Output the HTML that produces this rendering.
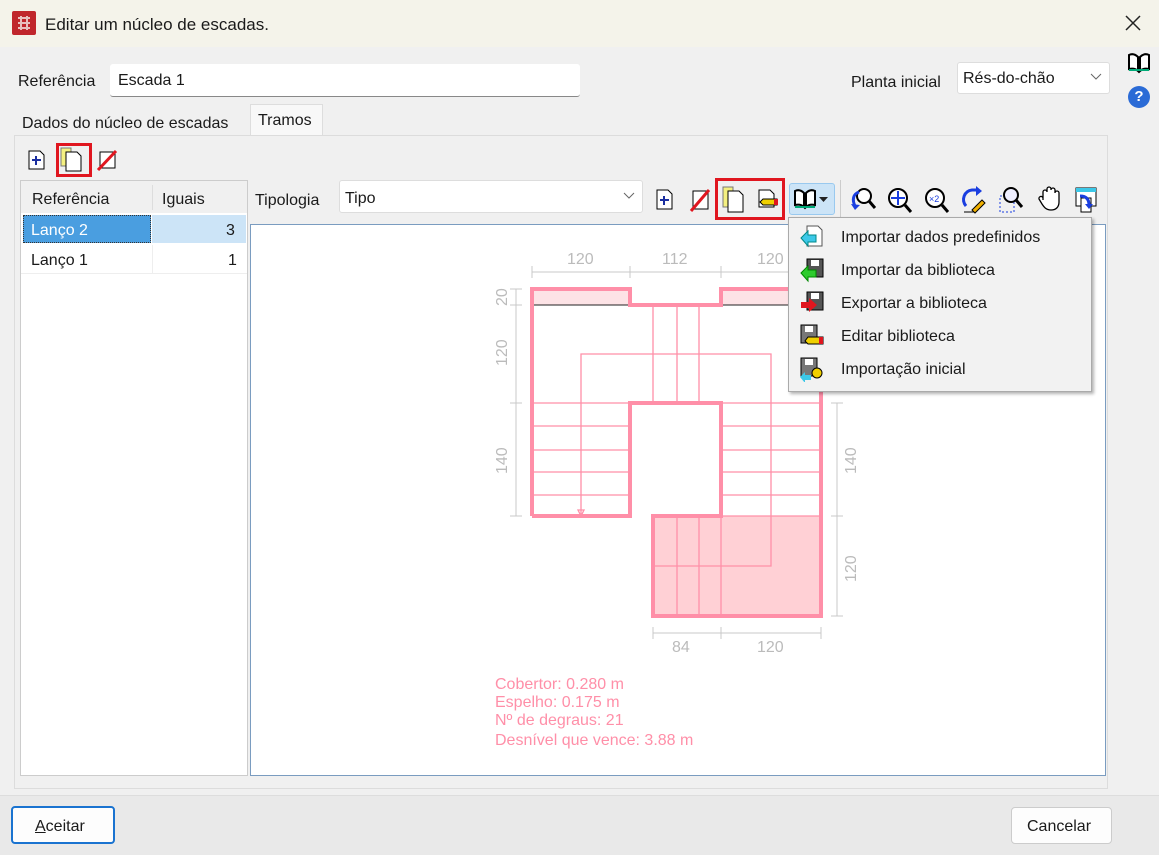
<!DOCTYPE html>
<html><head><meta charset="utf-8"><style>
*{margin:0;padding:0;box-sizing:border-box}
body{width:1159px;height:855px;background:#f0f0f0;font-family:"Liberation Sans",sans-serif;font-size:16px;color:#1a1a1a;position:relative;overflow:hidden}
.a{position:absolute}
.t{position:absolute;white-space:nowrap;margin-top:2px}
</style></head><body>
<div class="a" style="left:0;top:0;width:1159px;height:47px;background:#f4f3ea"></div>
<div class="a" style="left:12px;top:11px;width:24px;height:24px;background:#c0262c;border-radius:2px"></div>
<svg class="a" style="left:12px;top:11px" width="24" height="24"><path d="M6 7h12M6 12h12M6 17h12M9 5v14M15 5v14" stroke="#e8c0c0" stroke-width="2" fill="none"/></svg>
<div class="t" style="left:45px;top:13px;font-size:17px">Editar um núcleo de escadas.</div>
<svg class="a" style="left:1125px;top:15px" width="16" height="16"><path d="M1 1L15 15M15 1L1 15" stroke="#222" stroke-width="1.5"/></svg>

<div class="t" style="left:18px;top:71px">Referência</div>
<div class="a" style="left:110px;top:64px;width:470px;height:33px;background:#fff;border-bottom:1px solid #888;border-radius:3px"></div>
<div class="t" style="left:118px;top:70px">Escada 1</div>
<div class="t" style="left:851px;top:72px">Planta inicial</div>
<div class="a" style="left:957px;top:62px;width:153px;height:32px;background:#fff;border:1px solid #ddd;border-radius:3px"></div>
<div class="t" style="left:963px;top:68px">Rés-do-chão</div>
<svg class="a" style="left:1090px;top:73px" width="12" height="8"><path d="M1 1l5 5 5-5" stroke="#666" fill="none"/></svg>
<svg class="a" style="left:1127px;top:52px" width="24" height="22"><path d="M2 3c4-2 7 0 9 2v14c-2-2-5-3-9-2zM22 3c-4-2-7 0-9 2v14c2-2 5-3 9-2z" stroke="#000" stroke-width="2" fill="#fff"/><path d="M2 18h20" stroke="#0a7" stroke-width="2"/></svg>
<div class="a" style="left:1128px;top:86px;width:22px;height:22px;border-radius:50%;background:#2b6bd6;color:#fff;font-weight:bold;font-size:15px;text-align:center;line-height:22px">?</div>

<div class="t" style="left:22px;top:113px">Dados do núcleo de escadas</div>
<div class="a" style="left:250px;top:104px;width:73px;height:32px;background:#f8f8f8;border:1px solid #ddd;border-bottom:none"></div>
<div class="t" style="left:258px;top:110px">Tramos</div>
<div class="a" style="left:14px;top:135px;width:1094px;height:654px;border:1px solid #dcdcdc;background:#f0f0f0"></div>

<svg class="a" style="left:28px;top:150px" width="18" height="20"><path d="M1 1h11l4 4v14H1z" fill="#fff" stroke="#000"/><path d="M8 6v9M4 10h9" stroke="#1a2ea0" stroke-width="2"/></svg>
<div class="a" style="left:56px;top:143px;width:36px;height:34px;border:3px solid #e0161f"></div>
<svg class="a" style="left:60px;top:147px" width="26" height="26"><path d="M1 1h10v18H1z" fill="#f4f080" stroke="#777"/><path d="M6 5h11l4 4v15H6z" fill="#fff" stroke="#000"/></svg>
<svg class="a" style="left:96px;top:149px" width="22" height="22"><path d="M4 3h15v16H4z" fill="#fff" stroke="#000"/><path d="M2 21L20 2" stroke="#e0161f" stroke-width="3"/></svg>

<div class="a" style="left:20px;top:180px;width:228px;height:596px;background:#fff;border:1px solid #ccc"></div>
<div class="a" style="left:21px;top:181px;width:226px;height:32px;background:#f0f0f0"></div>
<div class="a" style="left:152px;top:185px;width:1px;height:25px;background:#ddd"></div>
<div class="t" style="left:32px;top:189px">Referência</div>
<div class="t" style="left:162px;top:189px">Iguais</div>
<div class="a" style="left:23px;top:215px;width:128px;height:28px;background:#4a9ee0;border:1px dotted #333"></div>
<div class="a" style="left:152px;top:215px;width:94px;height:28px;background:#cce4f7"></div>
<div class="t" style="left:31px;top:220px;color:#fff">Lanço 2</div>
<div class="t" style="left:226px;top:220px">3</div>
<div class="a" style="left:152px;top:245px;width:1px;height:28px;background:#eee"></div>
<div class="a" style="left:21px;top:273px;width:226px;height:1px;background:#eee"></div>
<div class="t" style="left:31px;top:250px">Lanço 1</div>
<div class="t" style="left:228px;top:250px">1</div>

<div class="t" style="left:255px;top:190px">Tipologia</div>
<div class="a" style="left:339px;top:180px;width:304px;height:33px;background:#fff;border:1px solid #ddd;border-radius:3px"></div>
<div class="t" style="left:345px;top:188px">Tipo</div>
<svg class="a" style="left:623px;top:192px" width="12" height="8"><path d="M1 1l5 5 5-5" stroke="#666" fill="none"/></svg>

<svg class="a" style="left:656px;top:189px" width="18" height="22"><path d="M1 1h11l4 4v15H1z" fill="#fff" stroke="#000"/><path d="M8 7v9M4 11h9" stroke="#1a2ea0" stroke-width="2"/></svg>
<svg class="a" style="left:689px;top:188px" width="22" height="24"><path d="M4 3h15v18H4z" fill="#fff" stroke="#000"/><path d="M2 23L20 2" stroke="#e0161f" stroke-width="3"/></svg>
<div class="a" style="left:715px;top:178px;width:70px;height:42px;border:3px solid #e0161f"></div>
<svg class="a" style="left:722px;top:186px" width="26" height="28"><path d="M1 1h10v20H1z" fill="#f4f080" stroke="#777"/><path d="M6 5h11l4 4v17H6z" fill="#fff" stroke="#000"/></svg>
<svg class="a" style="left:757px;top:188px" width="24" height="22"><path d="M2 2h11l4 4v13H2z" fill="#fff" stroke="#000"/><path d="M6 11h14v6H6l-3-3z" fill="#f0d000" stroke="#000"/><path d="M17 11h4v6h-4z" fill="#e0161f"/></svg>
<div class="a" style="left:789px;top:183px;width:46px;height:32px;background:#cce4f7;border:1px solid #99c9ef;border-radius:3px"></div>
<svg class="a" style="left:793px;top:188px" width="26" height="22"><path d="M2 3c4-2 7 0 9 2v14c-2-2-5-3-9-2zM22 3c-4-2-7 0-9 2v14c2-2 5-3 9-2z" stroke="#000" stroke-width="2" fill="#fff"/><path d="M2 19h20" stroke="#0a7" stroke-width="2"/></svg>
<svg class="a" style="left:819px;top:197px" width="10" height="6"><path d="M0 0h9L4.5 5z" fill="#222"/></svg>
<div class="a" style="left:840px;top:180px;width:1px;height:42px;background:#ccc"></div>
<svg class="a" style="left:850px;top:186px" width="26" height="28"><circle cx="14" cy="10" r="7" fill="#fff" stroke="#000" stroke-width="2"/><path d="M19 15l6 7" stroke="#000" stroke-width="3"/><path d="M9 6c-6 2-7 8-4 14" stroke="#1a3ee0" stroke-width="3" fill="none"/><path d="M1 18l4 6 5-5z" fill="#1a3ee0"/></svg>
<svg class="a" style="left:886px;top:186px" width="26" height="28"><circle cx="12" cy="12" r="9" fill="#fff" stroke="#000" stroke-width="2"/><path d="M12 5v14M5 12h14" stroke="#1a3ee0" stroke-width="2"/><path d="M19 19l6 7" stroke="#000" stroke-width="3"/></svg>
<svg class="a" style="left:923px;top:186px" width="26" height="28"><circle cx="12" cy="12" r="9" fill="#fff" stroke="#000" stroke-width="2"/><text x="6" y="16" font-size="9" fill="#1a3ee0" font-family="Liberation Sans">×2</text><path d="M19 19l6 7" stroke="#000" stroke-width="3"/></svg>
<svg class="a" style="left:960px;top:186px" width="26" height="28"><path d="M6 20C1 14 4 5 12 4h6" stroke="#1a3ee0" stroke-width="3" fill="none"/><path d="M16 0l6 5-6 5z" fill="#1a3ee0"/><path d="M12 24l10-10 3 3-10 10z" fill="#f0b000" stroke="#000"/><path d="M4 26h10" stroke="#000"/></svg>
<svg class="a" style="left:998px;top:186px" width="26" height="28"><path d="M2 10h14v16H2z" fill="none" stroke="#1a3ee0" stroke-dasharray="2 2"/><circle cx="13" cy="9" r="7" fill="#eef" stroke="#000" stroke-width="2"/><path d="M18 14l6 7" stroke="#000" stroke-width="3"/></svg>
<svg class="a" style="left:1038px;top:186px" width="22" height="26"><path d="M5 14V6a2 2 0 014 0V3a2 2 0 014 0v1a2 2 0 014 0v3a2 2 0 014 0v9c0 5-3 8-8 8s-7-3-9-6l-3-5a2 2 0 014-1z" fill="#fff" stroke="#000" stroke-width="1.3"/></svg>
<svg class="a" style="left:1075px;top:186px" width="26" height="28"><path d="M1 2h20v18H1z" fill="#fff" stroke="#000"/><path d="M1 2h20v4H1z" fill="#3cc8e8"/><path d="M6 12h10v14H6z" fill="#fff" stroke="#000"/><path d="M5 10c6 0 9 3 9 9" stroke="#1a3ee0" stroke-width="3" fill="none"/><path d="M10 18l4 5 4-5z" fill="#1a3ee0"/></svg>

<div class="a" style="left:250px;top:224px;width:856px;height:552px;background:#fff;border:1px solid #7a9cc0"></div>
<svg class="a" style="left:250px;top:224px" width="856" height="552" font-family="Liberation Sans" font-size="16" fill="#bbb">
<g transform="translate(-250,-224)">
<g stroke="#c8c8c8" stroke-width="1" fill="none">
<path d="M532 272H821M532 266v12M630 266v12M721 266v12M821 266v12"/>
<path d="M516 289V516M510 289h12M510 305h12M510 403h12M510 516h12"/>
<path d="M837 403V616M831 403h12M831 516h12M831 616h12"/>
<path d="M653 633H821M653 627v12M721 627v12M821 627v12"/>
</g>
<text x="567" y="264">120</text><text x="662" y="264">112</text><text x="757" y="264">120</text>
<text x="672" y="652">84</text><text x="757" y="652">120</text>
<text transform="translate(507,306) rotate(-90)">20</text>
<text transform="translate(507,366) rotate(-90)">120</text>
<text transform="translate(507,474) rotate(-90)">140</text>
<text transform="translate(856,474) rotate(-90)">140</text>
<text transform="translate(856,582) rotate(-90)">120</text>
<path d="M532 289h98v16h-98zM721 289h100v16h-100z" fill="#fde3e6"/>
<path d="M653 516h168v100H653z" fill="#ffd0d5"/>
<path d="M532 305h98M721 305h100" stroke="#222"/>
<g stroke="#ff8fa8" stroke-width="1.3" fill="none">
<path d="M532 403h98M532 426h98M532 450h98M532 472h98M532 495h98M532 516h98"/>
<path d="M721 403h100M721 426h100M721 450h100M721 472h100M721 495h100M721 516h100"/>
<path d="M653 305v98M677 305v98M699 305v98M630 305h91"/>
<path d="M677 516v100M699 516v100M721 516v100"/>
<path d="M581 516V354h190v212H653"/>
<path d="M578 510h6l-3 6z"/>
</g>
<g stroke="#ff8fa8" stroke-width="4" fill="none">
<path d="M532 516V289h98v16h91v-16h100v327H653V516h68V403h-91v113H532"/>
</g>
<g fill="#ff8fa8" font-size="16" font-family="Liberation Sans">
<text x="495" y="689">Cobertor: 0.280 m</text>
<text x="495" y="707">Espelho: 0.175 m</text>
<text x="495" y="725">Nº de degraus: 21</text>
<text x="495" y="745">Desnível que vence: 3.88 m</text>
</g>
</g>
</svg>

<div class="a" style="left:788px;top:217px;width:304px;height:175px;background:#f2f2f2;border:1px solid #aaa;box-shadow:2px 2px 3px rgba(0,0,0,.3)"></div>
<svg class="a" style="left:799px;top:224px" width="26" height="26"><path d="M8 2h11l4 4v16H8z" fill="#fff" stroke="#555"/><path d="M2 14l7-7v4h8v7H9v4z" fill="#3cc8e8" stroke="#088"/></svg>
<div class="t" style="left:841px;top:227px">Importar dados predefinidos</div>
<svg class="a" style="left:799px;top:257px" width="26" height="26"><path d="M8 2h16v18H8z" fill="#555" stroke="#000"/><path d="M12 3h8v6h-8z" fill="#fff"/><path d="M2 16l7-7v4h8v7H9v4z" fill="#2ecc2e" stroke="#080"/></svg>
<div class="t" style="left:841px;top:260px">Importar da biblioteca</div>
<svg class="a" style="left:799px;top:290px" width="26" height="26"><path d="M8 2h16v18H8z" fill="#555" stroke="#000"/><path d="M12 3h8v6h-8z" fill="#fff"/><path d="M2 12h8V8l8 7-8 7v-4H2z" fill="#e0161f"/></svg>
<div class="t" style="left:841px;top:293px">Exportar a biblioteca</div>
<svg class="a" style="left:799px;top:323px" width="26" height="26"><path d="M2 2h16v18H2z" fill="#777" stroke="#000"/><path d="M6 3h8v6H6z" fill="#fff"/><path d="M9 14h15v7H9l-3-3z" fill="#f0d000" stroke="#000"/><path d="M20 14h4v7h-4z" fill="#e0161f"/></svg>
<div class="t" style="left:841px;top:326px">Editar biblioteca</div>
<svg class="a" style="left:799px;top:356px" width="26" height="26"><path d="M2 2h16v18H2z" fill="#777" stroke="#000"/><path d="M6 3h8v6H6z" fill="#fff"/><circle cx="18" cy="17" r="5" fill="#f0d000" stroke="#000"/><path d="M1 21l5-5v3h6v5H6v3z" fill="#3cc8e8"/></svg>
<div class="t" style="left:841px;top:359px">Importação inicial</div>

<div class="a" style="left:0;top:795px;width:1159px;height:60px;background:#e9e9e9;border-top:1px solid #ddd"></div>
<div class="a" style="left:11px;top:806px;width:104px;height:38px;background:#fdfdfd;border:2px solid #1a73d0;border-radius:4px"></div>
<div class="t" style="left:35px;top:816px"><u>A</u>ceitar</div>
<div class="a" style="left:1011px;top:807px;width:101px;height:37px;background:#fdfdfd;border:1px solid #ccc;border-radius:4px"></div>
<div class="t" style="left:1027px;top:816px">Cancelar</div>
</body></html>
